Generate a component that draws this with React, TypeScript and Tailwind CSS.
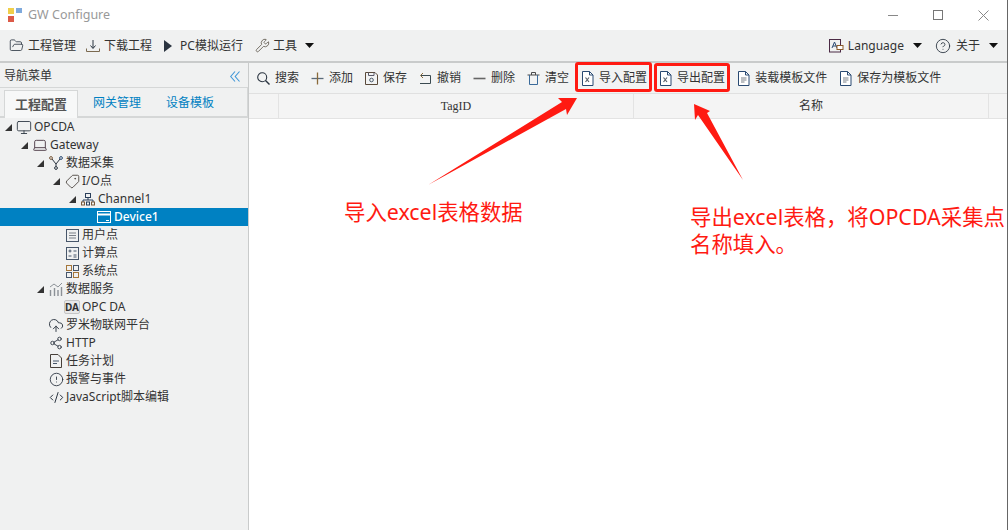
import type { ReactNode } from "react";
import {
  Monitor,
  Wrench,
  Share2,
  CloudUpload,
  CircleAlert,
  CodeXml,
  CircleHelp,
  Tag,
  Laptop,
  FolderOpen,
} from "lucide-react";

const font = "font-['Noto_Sans','Noto_Sans_CJK_SC',sans-serif]";

function Caret() {
  return (
    <svg width="9" height="5" viewBox="0 0 9 5" className="shrink-0">
      <polygon points="0,0 9,0 4.5,5" fill="#111" />
    </svg>
  );
}

function FileIcon({ excel = false }: { excel?: boolean }) {
  return (
    <svg width="13" height="15" viewBox="0 0 13 15" fill="none" className="shrink-0">
      <path d="M1.5 .5H8.5L12 4V14.5H1.5Z" stroke="#2a4a72" fill="#fff" />
      <path d="M8.5 .5V4H12" stroke="#2a4a72" />
      {excel ? (
        <path d="M4.5 6.5 8 11M8 6.5 4.5 11" stroke="#58606a" strokeWidth="1.2" />
      ) : (
        <path d="M4 7H9.5M4 9H9.5M4 11H7.5" stroke="#7b8087" />
      )}
    </svg>
  );
}

function DownloadIcon() {
  return (
    <svg width="14" height="14" viewBox="0 0 14 14" fill="none" className="shrink-0">
      <path d="M7 1V9M4.5 6.5 7 9.5 9.5 6.5" stroke="#2a3440" />
      <path d="M.5 9.5V12.5H13.5V9.5" stroke="#7b6a50" />
    </svg>
  );
}

function PlayIcon() {
  return (
    <svg width="8" height="12" viewBox="0 0 8 12" className="shrink-0">
      <polygon points="0,0 8,6 0,12" fill="#2b3440" />
    </svg>
  );
}

function LanguageIcon() {
  return (
    <svg width="15" height="14" viewBox="0 0 15 14" fill="none" className="shrink-0">
      <rect x=".5" y=".5" width="11" height="12.5" stroke="#4b2a45" />
      <path d="M3 9 5.5 3 8 9M4 7H7" stroke="#2a4a72" />
      <rect x="8" y="6.5" width="6" height="4" fill="#fff" stroke="#8a5a2a" />
    </svg>
  );
}

function ChevronsIcon() {
  return (
    <svg width="10" height="11" viewBox="0 0 10 11" fill="none" className="shrink-0">
      <path d="M5 .5 .7 5.5 5 10.5M9.5 .5 5.2 5.5 9.5 10.5" stroke="#3f97d8" strokeWidth="1.1" />
    </svg>
  );
}

function SearchIcon() {
  return (
    <svg width="13" height="13" viewBox="0 0 13 13" fill="none" className="shrink-0">
      <circle cx="5.2" cy="5.2" r="4.5" stroke="#2a3440" strokeWidth="1.1" />
      <path d="M8.5 8.5 12.5 12.5" stroke="#2a3440" strokeWidth="1.4" />
    </svg>
  );
}

function PlusIcon() {
  return (
    <svg width="13" height="13" viewBox="0 0 13 13" fill="none" className="shrink-0">
      <path d="M.5 6.5H12.5" stroke="#5a6a7a" strokeWidth="1.3" />
      <path d="M6.5 .5V12.5" stroke="#8a6a3a" strokeWidth="1.3" />
    </svg>
  );
}

function FloppyIcon() {
  return (
    <svg width="13" height="13" viewBox="0 0 13 13" fill="none" className="shrink-0">
      <path d="M.5 .5H10L12.5 3V12.5H.5Z" stroke="#5a4a3a" />
      <path d="M3.5 .5V3.5H9V.5" stroke="#5a5a6a" />
      <circle cx="6.5" cy="8" r="1.8" stroke="#4a5a6a" />
    </svg>
  );
}

function UndoIcon() {
  return (
    <svg width="13" height="13" viewBox="0 0 13 13" fill="none" className="shrink-0">
      <path d="M2 3.5H11.5V11.5H1" stroke="#3a4a50" />
      <path d="M4 1 1.5 3.5 4 6" stroke="#8a6a3a" />
    </svg>
  );
}

function MinusIcon() {
  return (
    <svg width="13" height="13" viewBox="0 0 13 13" fill="none" className="shrink-0">
      <path d="M.5 6.5H12.5" stroke="#666" strokeWidth="1.6" />
    </svg>
  );
}

function TrashIcon() {
  return (
    <svg width="13" height="13" viewBox="0 0 13 13" fill="none" className="shrink-0">
      <path d="M.5 3H12.5M4.5 3V.5H8.5V3" stroke="#4a4a4a" />
      <path d="M2.5 3V12.5H10.5V3" stroke="#3a6a9a" />
    </svg>
  );
}

function ChannelIcon() {
  return (
    <svg width="14" height="13" viewBox="0 0 14 13" fill="none" className="shrink-0">
      <rect x="4.5" y=".5" width="5" height="4" stroke="#2a3f5a" />
      <path d="M7 5V7M2 9V7H12V9" stroke="#2a3f5a" />
      <rect x=".5" y="9" width="3" height="3" stroke="#7b5a3a" />
      <rect x="5.5" y="9" width="3" height="3" stroke="#2a3f5a" />
      <rect x="10.5" y="9" width="3" height="3" stroke="#7b5a3a" />
    </svg>
  );
}

function DeviceIcon() {
  return (
    <svg width="14" height="12" viewBox="0 0 14 12" fill="none" className="shrink-0">
      <rect x=".5" y=".5" width="13" height="11" stroke="#fff" />
      <path d="M1 3.5H13" stroke="#fff" strokeWidth="2" />
      <path d="M9 9.5H12" stroke="#fff" />
    </svg>
  );
}

function ForkIcon() {
  return (
    <svg width="14" height="14" viewBox="0 0 14 14" fill="none" className="shrink-0">
      <circle cx="2" cy="2" r="1.4" stroke="#7b5a3a" />
      <circle cx="12" cy="2" r="1.4" stroke="#2a4a72" />
      <circle cx="7" cy="12" r="1.4" stroke="#2a3440" />
      <path d="M3 3 7 8 11 3M7 8V10.5" stroke="#2a3440" />
    </svg>
  );
}

function BoxIcon({ kind }: { kind: "list" | "calc" | "grid" }) {
  if (kind === "grid") {
    return (
      <svg width="13" height="13" viewBox="0 0 13 13" fill="none" className="shrink-0">
        <rect x=".5" y=".5" width="5" height="5" stroke="#a5763a" />
        <rect x="7.5" y=".5" width="5" height="5" stroke="#47566a" />
        <rect x=".5" y="7.5" width="5" height="5" stroke="#47566a" />
        <rect x="7.5" y="7.5" width="5" height="5" stroke="#a5763a" />
      </svg>
    );
  }
  return (
    <svg width="13" height="13" viewBox="0 0 13 13" fill="none" className="shrink-0">
      <rect x=".5" y=".5" width="12" height="12" stroke="#47566a" />
      {kind === "list" ? (
        <path d="M3 4H10M3 6.5H10M3 9H10" stroke="#7b8087" />
      ) : (
        <path d="M2.5 4H5.5M4 2.5V5.5M7.5 4H10.5M2.5 9H5.5M7.5 8H10.5M7.5 10H10.5" stroke="#47566a" />
      )}
    </svg>
  );
}

function BarsIcon() {
  return (
    <svg width="14" height="14" viewBox="0 0 14 14" fill="none" className="shrink-0">
      <path d="M1.5 8V14M5.5 6V14M9 8V14M12.5 5V14" stroke="#8c9197" strokeWidth="1.4" />
      <path d="M1 5 5 2 9 5 13 1" stroke="#8c9197" />
    </svg>
  );
}

function TaskIcon() {
  return (
    <svg width="12" height="14" viewBox="0 0 12 14" fill="none" className="shrink-0">
      <path d="M.5 .5H8L11.5 4V13.5H.5Z" stroke="#47403a" />
      <path d="M3 7H9M3 9.5H7" stroke="#47566a" />
    </svg>
  );
}

function DaIcon() {
  return (
    <span className="flex h-[14px] w-[16px] shrink-0 items-center justify-center rounded-[2px] border border-[#c5c5c5] bg-[#e8e8e8] text-[10px] font-bold leading-none text-[#333]">
      DA
    </span>
  );
}

function TreeArrow() {
  return (
    <svg width="7" height="7" viewBox="0 0 7 7">
      <polygon points="7,0 7,7 0,7" fill="#333" />
    </svg>
  );
}

type TreeNode = {
  label: string;
  indent: string;
  icon: ReactNode;
  open?: boolean;
  selected?: boolean;
};

const tree: TreeNode[] = [
  { label: "OPCDA", indent: "pl-0", open: true, icon: <Monitor size={17} strokeWidth={1.3} color="#2a3440" /> },
  { label: "Gateway", indent: "pl-4", open: true, icon: <Laptop size={16} strokeWidth={1.4} color="#4b3a45" /> },
  { label: "数据采集", indent: "pl-8", open: true, icon: <ForkIcon /> },
  { label: "I/O点", indent: "pl-12", open: true, icon: <Tag size={15} strokeWidth={1.4} color="#47403a" className="-scale-x-100" /> },
  { label: "Channel1", indent: "pl-16", open: true, icon: <ChannelIcon /> },
  { label: "Device1", indent: "pl-20", selected: true, icon: <DeviceIcon /> },
  { label: "用户点", indent: "pl-12", icon: <BoxIcon kind="list" /> },
  { label: "计算点", indent: "pl-12", icon: <BoxIcon kind="calc" /> },
  { label: "系统点", indent: "pl-12", icon: <BoxIcon kind="grid" /> },
  { label: "数据服务", indent: "pl-8", open: true, icon: <BarsIcon /> },
  { label: "OPC DA", indent: "pl-12", icon: <DaIcon /> },
  { label: "罗米物联网平台", indent: "pl-8", icon: <CloudUpload size={17} strokeWidth={1.4} color="#2a3440" /> },
  { label: "HTTP", indent: "pl-8", icon: <Share2 size={14} strokeWidth={1.5} color="#2a3440" /> },
  { label: "任务计划", indent: "pl-8", icon: <TaskIcon /> },
  { label: "报警与事件", indent: "pl-8", icon: <CircleAlert size={15} strokeWidth={1.4} color="#2a3440" /> },
  { label: "JavaScript脚本编辑", indent: "pl-8", icon: <CodeXml size={15} strokeWidth={1.6} color="#2a3440" /> },
];

const actions: { label: string; icon: ReactNode }[] = [
  { label: "搜索", icon: <SearchIcon /> },
  { label: "添加", icon: <PlusIcon /> },
  { label: "保存", icon: <FloppyIcon /> },
  { label: "撤销", icon: <UndoIcon /> },
  { label: "删除", icon: <MinusIcon /> },
  { label: "清空", icon: <TrashIcon /> },
  { label: "导入配置", icon: <FileIcon excel /> },
  { label: "导出配置", icon: <FileIcon excel /> },
  { label: "装载模板文件", icon: <FileIcon /> },
  { label: "保存为模板文件", icon: <FileIcon /> },
];

export default function App() {
  return (
    <div className={`relative flex h-[530px] w-[1008px] flex-col overflow-hidden border-r border-[#666] bg-white text-xs text-[#333] ${font}`}>
      {/* Title bar */}
      <div className="flex h-[30px] shrink-0 items-center pl-2 pr-[18px]">
        <div className="mr-1.5 grid grid-cols-[6px_6px] gap-x-0.5 gap-y-0.5">
          <span className="h-1.5 bg-[#f0cf4a]" />
          <span className="h-[5px] bg-[#7ea9dc]" />
          <span className="h-1.5 bg-[#dc5a48]" />
        </div>
        <span className="text-[12.5px] text-[#999]">GW Configure</span>
        <div className="ml-auto flex items-center gap-[35px]">
          <svg width="10" height="10" viewBox="0 0 10 10" fill="none">
            <path d="M0 5.5H10" stroke="#888" />
          </svg>
          <svg width="10" height="10" viewBox="0 0 10 10" fill="none">
            <rect x=".5" y=".5" width="9" height="9" stroke="#777" />
          </svg>
          <svg width="11" height="11" viewBox="0 0 11 11" fill="none">
            <path d="M.5 .5 10.5 10.5M10.5 .5 .5 10.5" stroke="#888" />
          </svg>
        </div>
      </div>

      {/* Main toolbar */}
      <div className="flex h-[33px] shrink-0 items-center border-b-2 border-[#c9cbcb] bg-[#f0f1f1] pl-[9px] pr-[9px]">
        <div className="flex items-center gap-1">
          <FolderOpen size={15} strokeWidth={1.3} color="#2a3440" />
          <span>工程管理</span>
        </div>
        <div className="ml-[10px] flex items-center gap-1">
          <DownloadIcon />
          <span>下载工程</span>
        </div>
        <div className="ml-3 flex items-center gap-2">
          <PlayIcon />
          <span>PC模拟运行</span>
        </div>
        <div className="ml-3 flex items-center gap-[3px]">
          <Wrench size={15} strokeWidth={1.3} color="#5a5348" />
          <span>工具</span>
          <span className="ml-[5px]">
            <Caret />
          </span>
        </div>
        <div className="ml-auto flex items-center gap-1">
          <LanguageIcon />
          <span>Language</span>
          <span className="ml-[5px]">
            <Caret />
          </span>
        </div>
        <div className="ml-[13px] flex items-center gap-[5px]">
          <CircleHelp size={16} strokeWidth={1.3} color="#2a3440" />
          <span>关于</span>
          <span className="ml-1">
            <Caret />
          </span>
        </div>
      </div>

      <div className="flex min-h-0 flex-1">
        {/* Navigation */}
        <aside className="flex w-[249px] shrink-0 flex-col border-r border-[#c9cbcb] bg-[#f0f1f1]">
          <div className="flex h-[25px] shrink-0 items-center justify-between border-b border-[#d5d7d7] pl-1 pr-2 pt-0.5">
            <span>导航菜单</span>
            <ChevronsIcon />
          </div>
          <div className="flex h-[30px] shrink-0 items-end border-b-2 border-r border-[#d5d7d7] pl-1">
            <div className="-mb-0.5 flex h-[28px] w-[74px] items-center justify-center border border-b-0 border-[#d5d7d7] bg-[#f7f8f8] text-[13px] font-bold text-[#555]">
              工程配置
            </div>
            <div className="flex h-[26px] items-center pl-[15px] text-[#0081c2]">网关管理</div>
            <div className="flex h-[26px] items-center pl-[25px] text-[#0081c2]">设备模板</div>
          </div>
          <div className="flex flex-col">
            {tree.map((n) => (
              <div
                key={n.label}
                className={`flex h-[18px] items-center ${n.indent} ${n.selected ? "bg-[#0081c2] text-white" : ""}`}
              >
                <span className="flex w-4 shrink-0 justify-center">{n.open && <TreeArrow />}</span>
                <span className="flex w-4 shrink-0 justify-center">{n.icon}</span>
                <span className={`ml-0.5 whitespace-nowrap ${n.selected ? "font-medium" : ""}`}>{n.label}</span>
              </div>
            ))}
          </div>
        </aside>

        {/* Table area */}
        <main className="flex min-w-0 flex-1 flex-col">
          <div className="flex h-[31px] shrink-0 items-center gap-3 border-b border-[#e0e0e0] bg-[#f2f3f3] pl-2">
            {actions.map((a) => (
              <div key={a.label} className="flex items-center gap-[5px] whitespace-nowrap">
                {a.icon}
                <span>{a.label}</span>
              </div>
            ))}
          </div>
          <div className="flex h-[25px] shrink-0 border-b border-[#e3e3e3] bg-[#f4f4f4] font-['Liberation_Serif','Noto_Sans_CJK_SC',serif]">
            <div className="w-[30px] shrink-0 border-r border-[#e3e3e3]" />
            <div className="flex w-[355px] shrink-0 items-center justify-center border-r border-[#e3e3e3]">TagID</div>
            <div className="flex w-[355px] shrink-0 items-center justify-center border-r border-[#e3e3e3]">名称</div>
          </div>
        </main>
      </div>

      {/* Annotations drawn on top of the screenshot */}
      <div className="absolute left-[575px] top-[62px] h-[30px] w-[77px] rounded-[3px] border-[3px] border-[#ff1a12]" />
      <div className="absolute left-[654px] top-[63px] h-[29px] w-[76px] rounded-[3px] border-[3px] border-[#ff1a12]" />
      <svg width="1008" height="530" viewBox="0 0 1008 530" className="pointer-events-none absolute left-0 top-0">
        <polygon points="428,185 562,102 558,98 577,98 567,115 566,109" fill="#ff1a12" />
        <polygon points="743,180 698,115 695,120 694,104 710,111 707,113" fill="#ff1a12" />
      </svg>
      <div className="absolute left-[344px] top-[198px] whitespace-nowrap text-[21.4px] leading-[27px] text-[#ff1a12]">
        导入excel表格数据
      </div>
      <div className="absolute left-[690px] top-[203px] whitespace-nowrap text-[21.4px] leading-[27px] text-[#ff1a12]">
        导出excel表格，将OPCDA采集点
        <br />
        名称填入。
      </div>
    </div>
  );
}
